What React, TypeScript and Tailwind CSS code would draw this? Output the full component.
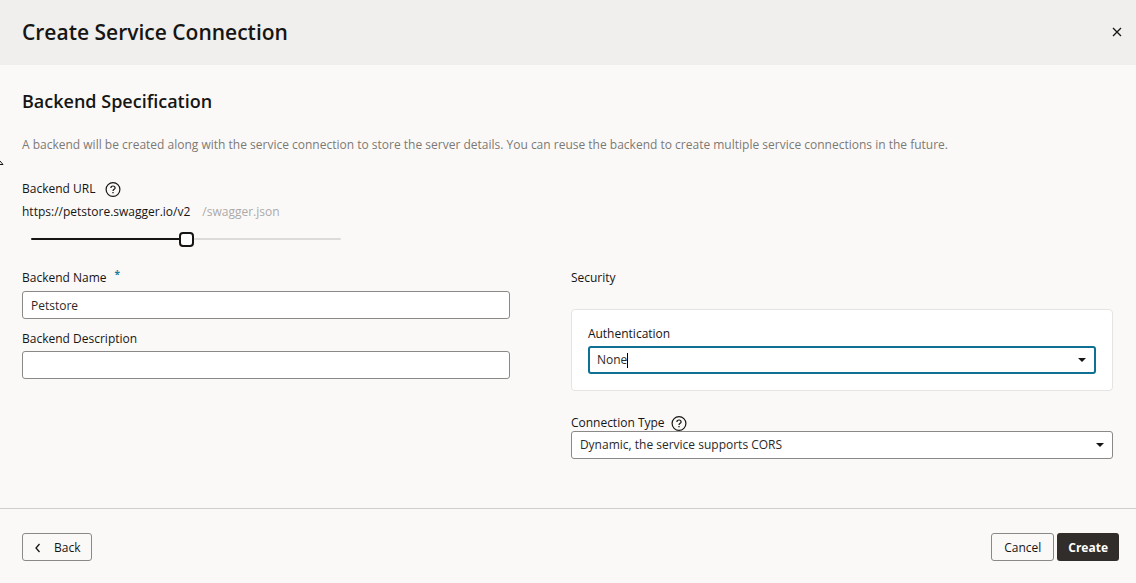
import React, { useState } from 'react';

const HelpIcon = () => (
  <svg viewBox="0 0 16 16" className="size-4" fill="none" stroke="currentColor" aria-hidden="true">
    <circle cx="8" cy="8.500" r="6.9" strokeWidth="1.2" />
    <path d="M5.9 7c0-1.3.9-2 2.1-2s2.1.8 2.1 1.9c0 1.4-2.1 1.5-2.1 3.1" strokeWidth="1.2" />
    <path d="M8 10.9v1.4" strokeWidth="1.3" />
  </svg>
);

const CaretDown = () => (
  <svg viewBox="0 0 8 4" className="h-1 w-2 shrink-0" fill="#161513" aria-hidden="true">
    <path d="M0 0h8L4 4z" />
  </svg>
);

const HelpButton: React.FC<{ label: string }> = ({ label }) => (
  <button type="button" aria-label={label} className="text-[#161513]">
    <HelpIcon />
  </button>
);

const labelClass = 'block text-xs leading-4 font-medium';
const inputClass =
  'block h-7 w-full rounded-[3px] border border-[#8b8987] bg-white px-2 text-xs text-[#2b2927] outline-none';

export default function App() {
  const [split, setSplit] = useState(50);
  const [name, setName] = useState('Petstore');
  const [description, setDescription] = useState('');
  const [auth, setAuth] = useState('None');

  return (
    <div className="relative flex min-h-screen flex-col bg-[#fbf9f8] font-['Open_Sans','Noto_Sans',sans-serif] text-[#161513]">
      <header className="flex h-[65px] items-center justify-between bg-[#f0efed] pr-[13px] pl-[22px]">
        <h1 className="text-[21px] font-semibold">Create Service Connection</h1>
        <button type="button" aria-label="Close">
          <svg viewBox="0 0 12 12" className="size-3" stroke="currentColor" strokeWidth="1.3" aria-hidden="true">
            <path d="M2 1l8 8M10 1l-8 8" />
          </svg>
        </button>
      </header>

      <main className="flex-1 pt-6 pr-[23px] pb-12 pl-[22px]">
        <h2 className="text-lg leading-6 font-semibold">Backend Specification</h2>
        <p className="mt-6 text-xs leading-4 text-[#7c7975]">
          A backend will be created along with the service connection to store the server details. You can reuse the
          backend to create multiple service connections in the future.
        </p>

        {/* Backend URL */}
        <div className="mt-7 flex items-center gap-2.5">
          <label htmlFor="url-split" className={labelClass}>Backend URL</label>
          <HelpButton label="Help for Backend URL" />
        </div>
        <div className="mt-[7px] flex gap-3 text-xs leading-4">
          <span>https://petstore.swagger.io/v2</span>
          <span className="text-[#acaaa8]">/swagger.json</span>
        </div>
        <input
          id="url-split"
          type="range"
          min={0}
          max={100}
          value={split}
          onChange={(e) => setSplit(Number(e.target.value))}
          style={{ backgroundImage: `linear-gradient(to right, #161513 ${split}%, #dddbd9 ${split}%)` }}
          className="mt-[18px] ml-[9px] block h-0.5 w-[310px] appearance-none rounded-full outline-none [&::-webkit-slider-thumb]:size-[15px] [&::-webkit-slider-thumb]:appearance-none [&::-webkit-slider-thumb]:rounded-[4px] [&::-webkit-slider-thumb]:border-2 [&::-webkit-slider-thumb]:border-solid [&::-webkit-slider-thumb]:border-[#161513] [&::-webkit-slider-thumb]:bg-white"
        />

        <div className="mt-[30px] grid grid-cols-[9fr_10fr] gap-[61px]">
          <div>
            <div className="flex gap-2">
              <label htmlFor="backend-name" className={labelClass}>Backend Name</label>
              <span className="text-[10px] leading-2 font-bold text-[#227e9e]" aria-hidden="true">*</span>
            </div>
            <input
              id="backend-name"
              required
              value={name}
              onChange={(e) => setName(e.target.value)}
              className={`mt-[5px] ${inputClass}`}
            />
            <label htmlFor="backend-description" className={`mt-3 ${labelClass}`}>Backend Description</label>
            <input
              id="backend-description"
              value={description}
              onChange={(e) => setDescription(e.target.value)}
              className={`mt-1 ${inputClass}`}
            />
          </div>

          <div>
            <h3 className={labelClass}>Security</h3>
            <div className="mt-[23px] rounded-[4px] border border-[#e6e4e2] bg-white p-4">
              <label htmlFor="authentication" className={labelClass}>Authentication</label>
              <div className="mt-1 flex h-7 items-center rounded-[3px] border-2 border-[#0f6f94] bg-white pr-2 pl-[7px]">
                <input
                  id="authentication"
                  role="combobox"
                  aria-expanded="false"
                  value={auth}
                  onChange={(e) => setAuth(e.target.value)}
                  className="field-sizing-content bg-transparent text-xs text-[#2b2927] caret-transparent outline-none"
                />
                <span className="h-[15px] w-px bg-black" />
                <span className="flex-1" />
                <CaretDown />
              </div>
            </div>

            <div className="mt-6 flex items-center gap-1.5">
              <label htmlFor="connection-type" className={labelClass}>Connection Type</label>
              <HelpButton label="Help for Connection Type" />
            </div>
            <div className="grid items-center">
              <select id="connection-type" className={`col-start-1 row-start-1 appearance-none ${inputClass}`}>
                <option>Dynamic, the service supports CORS</option>
              </select>
              <span className="pointer-events-none col-start-1 row-start-1 mr-[9px] justify-self-end">
                <CaretDown />
              </span>
            </div>
          </div>
        </div>
      </main>

      <footer className="flex items-center border-t border-[#d0cecc] pt-6 pr-[17px] pb-[22px] pl-[22px] text-xs font-medium">
        <button type="button" className="flex h-7 items-center gap-3 rounded-[3px] border border-[#8b8987] px-[11px] pt-px">
          <svg viewBox="0 0 8 10" className="h-2.5 w-2" fill="none" stroke="currentColor" strokeWidth="1.3" aria-hidden="true">
            <path d="M5.5 1L2 5l3.500 4" />
          </svg>
          Back
        </button>
        <button type="button" className="ml-auto h-7 rounded-[3px] border border-[#8b8987] px-3 pt-px">
          Cancel
        </button>
        <button type="button" className="ml-[3px] h-7 rounded-[3px] bg-[#312d2a] px-[11px] pt-px font-bold text-white">
          Create
        </button>
      </footer>

      {/* Pointer tip at the window edge */}
      <svg viewBox="0 0 4 6" className="absolute top-[160px] left-0 h-1.5 w-1" fill="none" stroke="#161513" aria-hidden="true">
        <path d="M0 1l3 3.500H0" />
      </svg>
    </div>
  );
}
